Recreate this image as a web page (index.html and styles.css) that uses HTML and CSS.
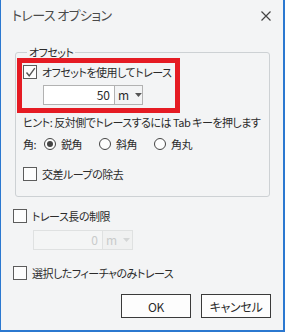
FILE: index.html
```html
<!DOCTYPE html>
<html lang="ja">
<head>
<meta charset="utf-8">
<link rel="stylesheet" href="styles.css">
</head>
<body>
<div class="window">
  <div class="titlebar">
    <span class="title">トレース オプション</span>
    <svg class="close" width="10" height="10" viewBox="0 0 10 10"><path d="M0.5 0.5L9.5 9.5M9.5 0.5L0.5 9.5" stroke="#444" stroke-width="1.2" fill="none"/></svg>
  </div>
  <fieldset class="group">
    <legend>オフセット</legend>
    <div class="check-row">
      <span class="box"><svg width="11" height="11" viewBox="0 0 11 11"><path d="M1.5 5.5L4.2 8.8L9.8 1.2" stroke="#555" stroke-width="1.4" fill="none"/></svg></span>
      <span>オフセットを使用してトレース</span>
    </div>
    <div class="num-row inner">
      <span class="num">50</span>
      <span class="unit">m<svg width="7" height="4" viewBox="0 0 7 4"><path d="M0 0H7L3.5 4Z" fill="#555"/></svg></span>
    </div>
    <div class="hint">ヒント: 反対側でトレースするには Tab キーを押します</div>
    <div class="radio-row">
      <span class="corner">角:</span>
      <span class="radio on"></span><span class="rlabel">鋭角</span>
      <span class="radio"></span><span class="rlabel">斜角</span>
      <span class="radio"></span><span class="rlabel">角丸</span>
    </div>
    <div class="check-row loop">
      <span class="box"></span>
      <span>交差ループの除去</span>
    </div>
  </fieldset>
  <div class="check-row outer first">
    <span class="box"></span>
    <span>トレース長の制限</span>
  </div>
  <div class="num-row disabled">
    <span class="num">0</span>
    <span class="unit">m<svg width="7" height="4" viewBox="0 0 7 4"><path d="M0 0H7L3.5 4Z" fill="#d4d6d6"/></svg></span>
  </div>
  <div class="check-row outer second">
    <span class="box"></span>
    <span>選択したフィーチャのみトレース</span>
  </div>
  <div class="buttons">
    <button class="btn">OK</button>
    <button class="btn">キャンセル</button>
  </div>
  <div class="highlight"></div>
</div>
</body>
</html>
```
FILE: styles.css
```css
* { box-sizing: border-box; }
html, body { margin: 0; padding: 0; }
body {
  font-family: "Noto Sans CJK JP", "Noto Sans", sans-serif;
  font-size: 11px;
  letter-spacing: -0.5px;
  font-feature-settings: "palt";
  color: #2b2b2b;
  background: #f3f4f5;
}
.window {
  position: relative;
  width: 285px;
  height: 332px;
  background: #f3f4f5;
  border-left: 1px solid #2b78d0;
  border-right: 2px solid #2b78d0;
  border-bottom: 2px solid #2b78d0;
  display: flex;
  flex-direction: column;
  align-items: flex-start;
}
.titlebar {
  width: 100%;
  height: 32px;
  display: flex;
  align-items: center;
  justify-content: space-between;
  padding: 0 12px 2px 11px;
}
.title {
  font-size: 13px;
  letter-spacing: -0.6px;
  color: #4a4a4a;
  line-height: 20px;
}
.close { margin-top: 1px; }
.group {
  margin: 12px 0 0 14px;
  width: 255px;
  border: 1px solid #cdd1d4;
  border-radius: 3px;
  padding: 4px 0 14px 7px;
  min-width: 0;
}
.group legend {
  padding: 0 2px;
  margin-left: 4px;
  line-height: 16px;
  color: #2b2b2b;
}
.check-row {
  display: flex;
  align-items: center;
  height: 16px;
  line-height: 16px;
  white-space: nowrap;
}
.box {
  width: 14px;
  height: 14px;
  border: 1px solid #5c5c5c;
  background: #fdfdfd;
  margin-right: 5px;
  display: flex;
  align-items: center;
  justify-content: center;
  flex: none;
}
.num-row {
  display: flex;
  height: 20px;
  margin-top: 5px;
  margin-left: 20px;
}
.num {
  width: 72px;
  height: 20px;
  border: 1px solid #b2b2b2;
  background: #fff;
  text-align: right;
  padding-right: 4px;
  line-height: 18px;
  font-size: 12px;
  letter-spacing: 0;
}
.unit {
  width: 28px;
  height: 20px;
  border: 1px solid #b2b2b2;
  border-left: none;
  display: flex;
  align-items: center;
  padding-left: 3px;
  gap: 6px;
  font-size: 12px;
  letter-spacing: 0;
  line-height: 18px;
}
.hint {
  margin-top: 9px;
  line-height: 16px;
  white-space: nowrap;
}
.radio-row {
  margin-top: 6px;
  height: 16px;
  display: flex;
  align-items: center;
  line-height: 16px;
}
.corner { width: 12px; }
.radio {
  width: 12px;
  height: 12px;
  border: 1px solid #444;
  border-radius: 50%;
  margin-right: 5px;
  display: flex;
  align-items: center;
  justify-content: center;
  background: #fdfdfd;
  flex: none;
}
.corner + .radio { margin-left: 9px; }
.rlabel { width: 22px; margin-right: 16px; }
.radio.on::after {
  content: "";
  width: 6px;
  height: 6px;
  border-radius: 50%;
  background: #444;
}
.loop { margin-top: 14px; }
.outer { margin-left: 12px; }
.first { margin-top: 11px; }
.disabled { margin-left: 32px; margin-top: 6px; }
.disabled .num {
  width: 70px;
  background: #f4f5f5;
  border-color: #dfe1e1;
  color: #c9cbcb;
}
.disabled .unit {
  width: 30px;
  border-color: #dfe1e1;
  background: #f0f1f1;
  color: #c9cbcb;
}
.second { margin-top: 15px; }
.buttons {
  width: 100%;
  display: flex;
  justify-content: flex-end;
  gap: 10px;
  padding-right: 12px;
  margin-top: 13px;
}
.btn {
  width: 70px;
  height: 24px;
  border: 1px solid #3a3a3a;
  background: #fdfdfd;
  font-family: inherit;
  font-size: 12px;
  letter-spacing: -0.3px;
  font-feature-settings: "palt";
  color: #2b2b2b;
  padding: 0;
}
.highlight {
  position: absolute;
  left: 16px;
  top: 58px;
  width: 163px;
  height: 55px;
  border: 5px solid #e51b23;
}
```
